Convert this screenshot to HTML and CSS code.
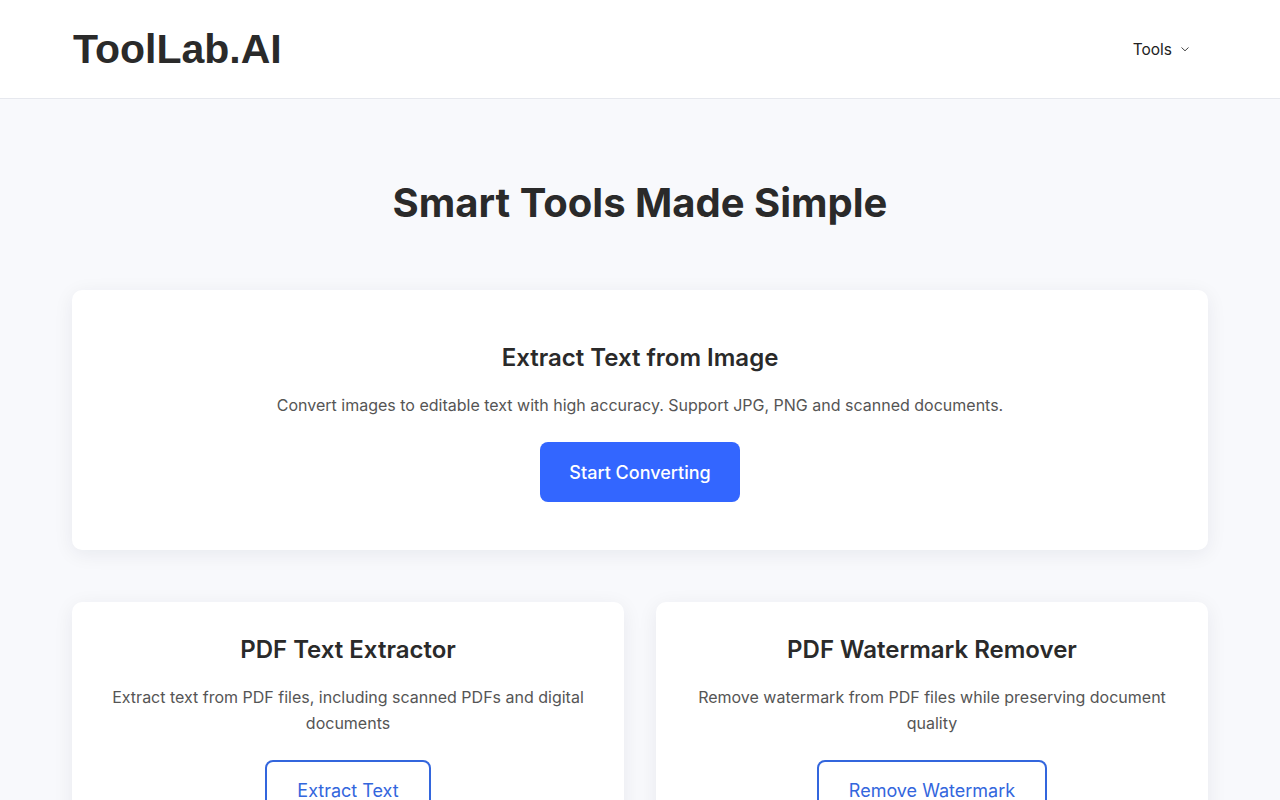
FILE: index.html
```html
<!DOCTYPE html>
<html>
<head>
    <title>ToolLab.AI</title>
    <link rel="stylesheet" href="styles.css">
</head>
<body>
    <header class="site-header">
        <div class="container header-row">
            <a class="logo" href="#">ToolLab.AI</a>
            <nav class="nav">
                <span class="nav-item">Tools
                    <svg width="10" height="10" viewBox="0 0 10 10" fill="none" stroke="#444" stroke-width="1"><path d="M1.5 3.5 L5 6.8 L8.5 3.5"/></svg>
                </span>
            </nav>
        </div>
    </header>

    <main class="container">
        <h1 class="hero-title">Smart Tools Made Simple</h1>

        <section class="card card-main">
            <h2>Extract Text from Image</h2>
            <p>Convert images to editable text with high accuracy. Support JPG, PNG and scanned documents.</p>
            <button class="btn btn-primary">Start Converting</button>
        </section>

        <div class="tool-grid">
            <section class="card">
                <h2>PDF Text Extractor</h2>
                <p>Extract text from PDF files, including scanned PDFs and digital documents</p>
                <button class="btn btn-outline">Extract Text</button>
            </section>
            <section class="card">
                <h2>PDF Watermark Remover</h2>
                <p>Remove watermark from PDF files while preserving document quality</p>
                <button class="btn btn-outline">Remove Watermark</button>
            </section>
        </div>
    </main>
</body>
</html>
```

FILE: styles.css
```css
* { box-sizing: border-box; }
body { margin: 0; font-family: Inter, "Noto Sans", sans-serif; color: #2a2a2a; background: #f8f9fc; }
.container { max-width: 1136px; margin: 0 auto; }
.site-header { background: #fff; border-bottom: 1px solid #e6e8ee; height: 99px; }
.header-row { display: flex; align-items: center; justify-content: space-between; height: 98px; }
.logo { font-family: "Liberation Sans", Arial, sans-serif; font-weight: bold; font-size: 41px; color: #2a2a2a; text-decoration: none; padding-left: 1px; }
.nav { padding-right: 18px; }
.nav-item { font-size: 15.5px; color: #222; display: flex; align-items: center; gap: 8px; }
.hero-title { text-align: center; font-size: 40px; font-weight: 700; margin: 80px 0 63px; line-height: 48px; }
.card { background: #fff; border-radius: 10px; box-shadow: 0 4px 20px rgba(20, 30, 60, 0.07); text-align: center; padding: 51px 40px 48px; }
.card h2 { font-size: 24px; font-weight: 600; margin: 0 0 17px; line-height: 34px; }
.card p { font-size: 16px; line-height: 26px; color: #555; margin: 0 0 24px; }
.card-main { margin-bottom: 52px; }
.tool-grid { display: grid; grid-template-columns: 1fr 1fr; gap: 32px; }
.tool-grid .card { padding-top: 31px; }
.btn { font-family: Inter, "Noto Sans", sans-serif; font-size: 18px; font-weight: 500; border-radius: 8px; cursor: pointer; height: 60px; padding: 0 29px; }
.btn-primary { background: #3366ff; color: #fff; border: none; }
.btn-outline { background: #fff; color: #3366dd; border: 2px solid #3366dd; font-weight: 400; padding: 0 30px; }
```
